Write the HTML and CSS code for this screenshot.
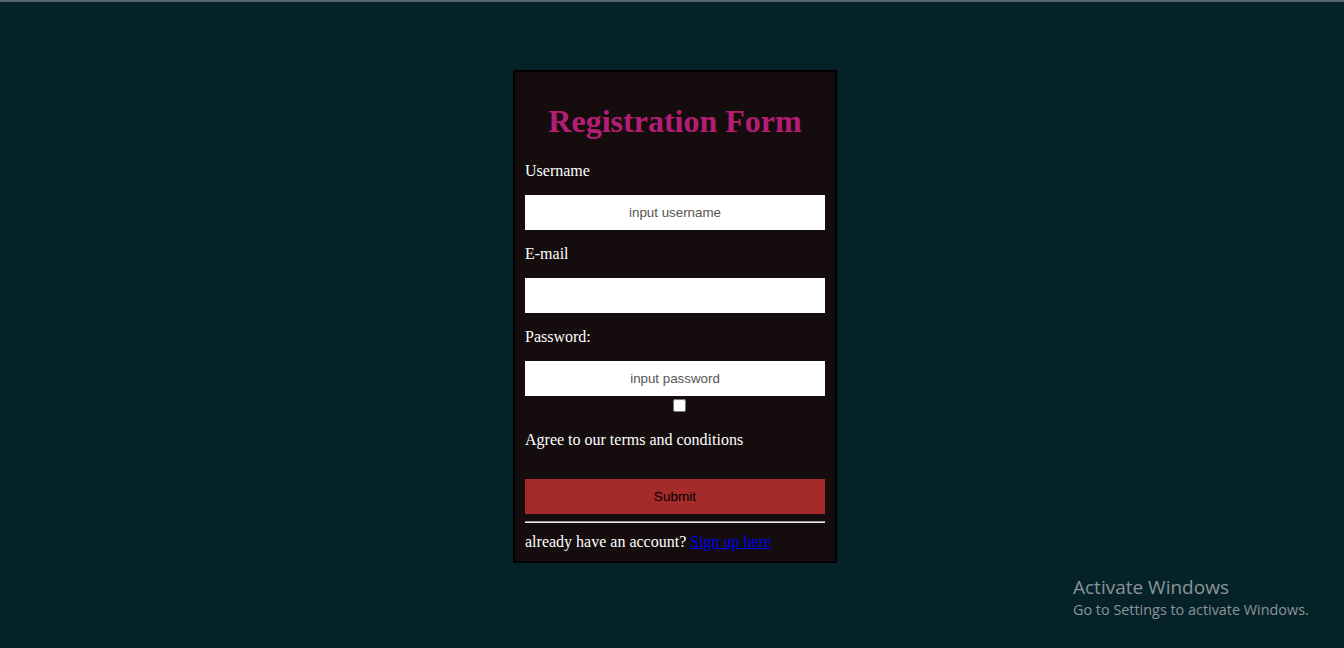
FILE: index.html
```html
<!DOCTYPE html>
<html>
<head>
<meta charset="utf-8">
<link rel="stylesheet" href="styles.css">
</head>
<body>
<div class="topline"></div>
<div class="page">
  <form class="card">
    <h1 class="title">Registration Form</h1>
    <label class="lbl">Username</label>
    <input class="field" type="text" placeholder="input username">
    <label class="lbl">E-mail</label>
    <input class="field" type="email">
    <label class="lbl">Password:</label>
    <input class="field pw" type="password" placeholder="input password">
    <div class="check-row"><input class="check" type="checkbox"></div>
    <div class="agree">Agree to our terms and conditions</div>
    <button class="submit" type="button">Submit</button>
    <hr class="rule">
    <div class="foot">already have an account? <a class="link" href="#">Sign up here</a></div>
  </form>
</div>
<div class="activate">
  <div class="act-title">Activate Windows</div>
  <div class="act-sub">Go to Settings to activate Windows.</div>
</div>
</body>
</html>
```

FILE: styles.css
```css
html, body {
  margin: 0;
  padding: 0;
}
body {
  background: #062229;
  width: 1344px;
  height: 648px;
  overflow: hidden;
  position: relative;
  font-family: "Liberation Serif", "Times New Roman", serif;
}
.topline {
  height: 2px;
  background: #56656e;
}
.page {
  display: flex;
  justify-content: center;
  padding-top: 68px;
  padding-left: 6px;
}
.card {
  width: 300px;
  padding: 10px;
  background: #150d0d;
  border: 2px solid #000;
  display: flex;
  flex-direction: column;
}
.title {
  margin: 21px 0 22px;
  font-size: 32px;
  line-height: 37px;
  font-weight: bold;
  color: #b41d74;
  text-align: center;
}
.lbl {
  display: block;
  color: #fff;
  font-size: 16px;
  line-height: 18px;
  margin-bottom: 15px;
}
.field {
  width: 300px;
  height: 35px;
  box-sizing: border-box;
  border: none;
  padding: 0;
  margin: 0 0 15px;
  background: #fff;
  text-align: center;
  font-family: "Liberation Sans", Arial, sans-serif;
  font-size: 13.33px;
  color: #000;
  outline: none;
}
.field::placeholder {
  color: #555;
}
.field.pw {
  margin-bottom: 0;
}
.check-row {
  height: 16px;
  padding-left: 148px;
}
.check {
  width: 13px;
  height: 13px;
  margin: 3px 0 0 0;
  display: block;
}
.agree {
  margin-top: 19px;
  color: #fff;
  font-size: 16px;
  line-height: 18px;
}
.submit {
  margin-top: 30px;
  height: 35px;
  width: 300px;
  border: none;
  background: #a52a2a;
  color: #000;
  font-family: "Liberation Sans", Arial, sans-serif;
  font-size: 13.6px;
  padding: 0;
}
.rule {
  margin: 7px 0 0;
  border: none;
  border-top: 1px solid #9a9a9a;
  border-bottom: 1px solid #eee;
  height: 0;
}
.foot {
  margin-top: 10px;
  color: #fff;
  font-size: 16px;
  line-height: 18px;
}
.link {
  color: #0000ee;
  text-decoration: underline;
}
.activate {
  position: absolute;
  left: 1073px;
  top: 575px;
  font-family: "Open Sans", "Noto Sans", sans-serif;
  color: #8a9499;
}
.act-title {
  font-size: 19px;
  line-height: 25px;
}
.act-sub {
  font-size: 14.4px;
  line-height: 20px;
  margin-top: 0;
}
```
